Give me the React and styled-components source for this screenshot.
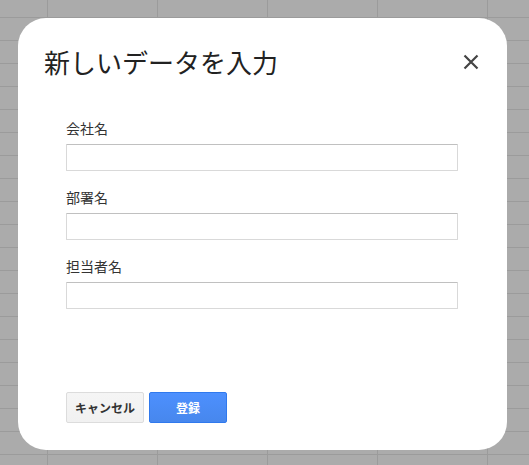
import React from 'react';
import styled, { createGlobalStyle } from 'styled-components';

const GlobalStyle = createGlobalStyle`
  html, body {
    margin: 0;
    padding: 0;
  }
  body {
    font-family: "Noto Sans CJK JP", "Noto Sans", sans-serif;
    color: #333;
  }
`;

// spreadsheet grid behind the dialog
const Sheet = styled.div`
  width: 529px;
  height: 465px;
  box-sizing: border-box;
  padding: 18px 0 0 18px;
  background-color: #ababab;
  background-image:
    linear-gradient(to right, #9b9b9b 1px, transparent 1px),
    linear-gradient(to bottom, #9b9b9b 1px, transparent 1px);
  background-size: 110px 23px;
  background-position: 47px 17px;
  overflow: hidden;
`;

const Dialog = styled.div`
  width: 489px;
  height: 432px;
  box-sizing: border-box;
  background: #fff;
  border-radius: 28px;
  display: flex;
  flex-direction: column;
  padding: 26px 26px 27px 26px;
`;

const Header = styled.div`
  display: flex;
  align-items: center;
  justify-content: space-between;
`;

const Title = styled.h1`
  margin: 0;
  font-size: 26px;
  font-weight: 400;
  line-height: 36px;
  color: #222;
`;

const CloseButton = styled.button`
  border: none;
  background: none;
  padding: 0;
  width: 20px;
  height: 20px;
  cursor: pointer;
  display: flex;
  align-items: center;
  justify-content: center;
`;

const Form = styled.div`
  padding: 38px 0 0 22px;
  display: flex;
  flex-direction: column;
  gap: 16px;
`;

const Field = styled.label`
  display: flex;
  flex-direction: column;
  gap: 5px;
`;

const LabelText = styled.span`
  font-size: 14px;
  line-height: 21px;
  color: #333;
`;

const TextInput = styled.input`
  width: 392px;
  height: 27px;
  box-sizing: border-box;
  border: 1px solid #d9d9d9;
  border-top-color: #c0c0c0;
  border-radius: 1px;
  padding: 0 8px;
  font-size: 13px;
  font-family: inherit;
  outline: none;
`;

const Actions = styled.div`
  margin-top: auto;
  padding-left: 22px;
  display: flex;
  gap: 5px;
`;

const Button = styled.button`
  height: 31px;
  min-width: 78px;
  padding: 0 8px;
  box-sizing: border-box;
  border-radius: 2px;
  font-family: inherit;
  font-size: 12px;
  font-weight: 700;
  cursor: pointer;
  border: 1px solid ${(p) => (p.primary ? '#3079ed' : '#dcdcdc')};
  color: ${(p) => (p.primary ? '#fff' : '#333')};
  background: ${(p) => (p.primary
    ? 'linear-gradient(#4d90fe, #4787ed)'
    : 'linear-gradient(#f5f5f5, #f1f1f1)')};
`;

const fields = ['会社名', '部署名', '担当者名'];

export default function App() {
  return (
    <>
      <GlobalStyle />
      <Sheet>
        <Dialog>
          <Header>
            <Title>新しいデータを入力</Title>
            <CloseButton aria-label="閉じる">
              <svg width="16" height="16" viewBox="0 0 16 16">
                <path d="M1.5 1.5 L14.5 14.5 M14.5 1.5 L1.5 14.5" stroke="#444" strokeWidth="2.2" />
              </svg>
            </CloseButton>
          </Header>
          <Form>
            {fields.map((name) => (
              <Field key={name}>
                <LabelText>{name}</LabelText>
                <TextInput type="text" />
              </Field>
            ))}
          </Form>
          <Actions>
            <Button>キャンセル</Button>
            <Button primary>登録</Button>
          </Actions>
        </Dialog>
      </Sheet>
    </>
  );
}
